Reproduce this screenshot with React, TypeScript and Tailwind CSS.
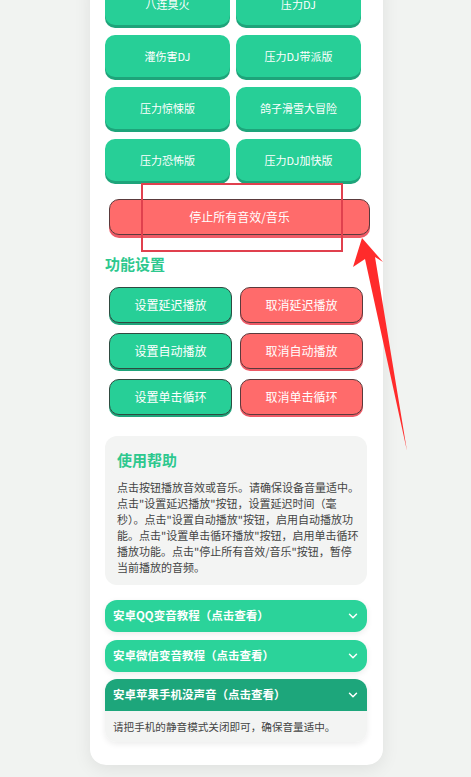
import React from "react";
import { ChevronDown } from "lucide-react";

const font = { fontFamily: '"Noto Sans CJK SC", "Noto Sans", sans-serif' };

const topButtons = [
  "八连臭火",
  "压力DJ",
  "灌伤害DJ",
  "压力DJ带派版",
  "压力惊悚版",
  "鸽子滑雪大冒险",
  "压力恐怖版",
  "压力DJ加快版",
];

const funcRows = [
  ["设置延迟播放", "取消延迟播放"],
  ["设置自动播放", "取消自动播放"],
  ["设置单击循环", "取消单击循环"],
];

const helpLines = [
  "点击按钮播放音效或音乐。请确保设备音量适中。",
  "点击\"设置延迟播放\"按钮，设置延迟时间（毫",
  "秒）。点击\"设置自动播放\"按钮，启用自动播放功",
  "能。点击\"设置单击循环播放\"按钮，启用单击循环",
  "播放功能。点击\"停止所有音效/音乐\"按钮，暂停",
  "当前播放的音频。",
];

export default function App() {
  return (
    <div
      className="relative w-[471px] h-[777px] overflow-hidden bg-[#f1f3f1]"
      style={font}
    >
      <div className="ml-[90px] w-[293px] -mt-[17px] bg-white rounded-b-[16px] shadow-[0_4px_18px_rgba(0,0,0,0.08)] pl-[15px] pr-[16px] pb-[23px]">
        {/* top sound grid */}
        <div className="grid w-[256px] grid-cols-[125px_125px] gap-x-[6px] gap-y-[10px]">
          {topButtons.map((t) => (
            <div
              key={t}
              className="h-[42px] rounded-[10px] bg-[#27cf97] shadow-[0_3px_0_#1ea47a] text-white text-[11px] flex items-center justify-center"
            >
              {t}
            </div>
          ))}
        </div>

        {/* stop button */}
        <div className="mt-[18px] ml-[4px] w-[261px] h-[36px] rounded-[10px] bg-[#ff6b6b] border border-[#5a3a3c] shadow-[0_3px_0_#ee5a66] text-white text-[12px] flex items-center justify-center">
          停止所有音效/音乐
        </div>

        {/* heading */}
        <div className="mt-[19px] text-[15px] leading-[20px] font-bold text-[#2dc88e]">
          功能设置
        </div>

        {/* function grid */}
        <div className="mt-[13px] ml-[4px] grid grid-cols-[123px_123px] gap-x-[8px] gap-y-[10px]">
          {funcRows.flat().map((t, i) => (
            <div
              key={t}
              className={
                i % 2 === 0
                  ? "h-[36px] rounded-[10px] bg-[#27cf97] border border-[#2f4a40] shadow-[0_2px_0_#1ea47a] text-white text-[12px] flex items-center justify-center"
                  : "h-[36px] rounded-[10px] bg-[#ff6b6b] border border-[#5a3a3c] shadow-[0_2px_0_#ee5a66] text-white text-[12px] flex items-center justify-center"
              }
            >
              {t}
            </div>
          ))}
        </div>

        {/* help */}
        <div className="mt-[21px] w-[262px] rounded-[12px] bg-[#f3f4f3] pt-[14px] pb-[10px] pl-[12px] pr-[6px]">
          <div className="text-[15px] leading-[20px] font-bold text-[#2dc88e]">
            使用帮助
          </div>
          <div className="mt-[9px] text-[11px] leading-[16px] text-[#444444]">
            {helpLines.map((l) => (
              <div key={l} className="whitespace-nowrap">
                {l}
              </div>
            ))}
          </div>
        </div>

        {/* accordions */}
        <div className="mt-[15px] w-[262px] flex flex-col gap-[8px]">
          <div className="h-[32px] rounded-[12px] bg-[#2bd39a] shadow-[0_2px_6px_rgba(0,0,0,0.08)] flex items-center justify-between pl-[8px] pr-[7px] text-white text-[11.5px] font-bold">
            <span>安卓QQ变音教程（点击查看）</span>
            <ChevronDown size={14} strokeWidth={2.5} />
          </div>
          <div className="h-[32px] rounded-[12px] bg-[#2bd39a] shadow-[0_2px_6px_rgba(0,0,0,0.08)] flex items-center justify-between pl-[8px] pr-[7px] text-white text-[11.5px] font-bold">
            <span>安卓微信变音教程（点击查看）</span>
            <ChevronDown size={14} strokeWidth={2.5} />
          </div>
          <div className="-mt-[1px] rounded-[12px] overflow-hidden shadow-[0_2px_6px_rgba(0,0,0,0.08)]">
            <div className="h-[32px] bg-[#1da67b] flex items-center justify-between pl-[8px] pr-[7px] text-white text-[11.5px] font-bold">
              <span>安卓苹果手机没声音（点击查看）</span>
              <ChevronDown size={14} strokeWidth={2.5} />
            </div>
            <div className="h-[31px] bg-[#f3f4f3] flex items-center pl-[8px] text-[10.6px] text-[#444444]">
              请把手机的静音模式关闭即可，确保音量适中。
            </div>
          </div>
        </div>
      </div>

      {/* annotation: red rectangle */}
      <div className="absolute left-[141px] top-[183px] w-[202px] h-[69px] border-2 border-[#e0404e]" />

      {/* annotation: red arrow */}
      <svg
        className="absolute left-0 top-0 pointer-events-none"
        width="471"
        height="777"
        viewBox="0 0 471 777"
      >
        <polygon
          points="362,238 383,262 375,257 407,451 365,259 353,267"
          fill="#ff2b2b"
        />
      </svg>
    </div>
  );
}
